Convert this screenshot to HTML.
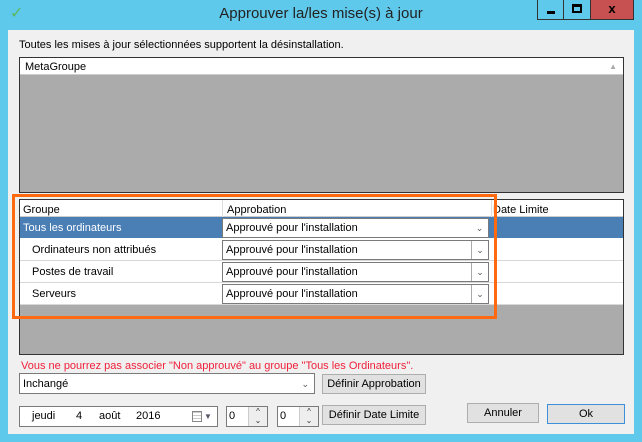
<!DOCTYPE html><html><head><style>
*{box-sizing:border-box;margin:0;padding:0}
body{width:642px;height:442px;background:#5fc9eb;font-family:"Liberation Sans",sans-serif;font-size:11px;color:#000;position:relative;overflow:hidden}
.a{position:absolute}
.client{left:8px;top:30px;width:626px;height:404px;background:#f0f0f0}
.btn{background:#e1e1e1;border:1px solid #adadad;text-align:center;line-height:18px;font-size:11px}
.combo{background:#fff;border:1px solid #7a7a7a}
.row{position:absolute;left:0;width:603px;height:22px;border-bottom:1px solid #d8d8d8}
.row>span{position:absolute;top:5px}
.cb{position:absolute;left:202px;top:1px;width:267px;height:20px;background:#fff;border:1px solid #7a7a7a;line-height:19px;padding-left:3px}
.cb .dd{position:absolute;right:0;top:0;width:17px;height:18px;border-left:1px solid #aaa;text-align:center;color:#555;font-size:9px}
</style></head><body>
<div class="a" style="left:10px;top:3px;color:#5cb85c;font-size:16px">✓</div>
<div class="a" style="left:0;width:642px;top:5px;text-align:center;font-size:15px;color:#222">Approuver la/les mise(s) à jour</div>
<div class="a" style="left:537px;top:0;width:27px;height:20px;border:1px solid #333;border-top:none"><div class="a" style="left:9px;top:11px;width:8px;height:3px;background:#000"></div></div>
<div class="a" style="left:563px;top:0;width:28px;height:20px;border:1px solid #333;border-top:none"><div class="a" style="left:8px;top:4px;width:10px;height:9px;border:2px solid #000;border-top-width:3px"></div></div>
<div class="a" style="left:590px;top:0;width:44px;height:20px;background:#c75050;border:1px solid #333;border-top:none;text-align:center;font-weight:bold;font-size:13px;line-height:17px">x</div>
<div class="a client"></div>
<div class="a" style="left:19px;top:39px">Toutes les mises à jour sélectionnées supportent la désinstallation.</div>
<div class="a" style="left:19px;top:57px;width:605px;height:136px;background:#ababab;border:1px solid #333">
 <div class="a" style="left:0;top:0;width:603px;height:17px;background:#fff;border-bottom:1px solid #ccc;padding-left:5px;line-height:18px">MetaGroupe<span style="position:absolute;right:6px;color:#aaa;font-size:8px">▲</span></div>
</div>
<div class="a" style="left:19px;top:199px;width:605px;height:156px;background:#ababab;border:1px solid #333">
 <div class="a" style="left:0;top:0;width:603px;height:17px;background:#fff;border-bottom:1px solid #ccc;line-height:20px">
  <span class="a" style="left:3px">Groupe</span><span class="a" style="left:202px;height:17px;border-left:1px solid #ddd;padding-left:4px">Approbation</span><span class="a" style="left:471px;height:17px;border-left:1px solid #ddd;padding-left:1px">Date Limite</span></div>
 <div class="row" style="top:17px;background:#4a7fb5;color:#fff;border-bottom:1px solid #fff"><span style="left:3px">Tous les ordinateurs</span><div class="cb" style="color:#000">Approuvé pour l'installation<div class="dd" style="border:none">⌄</div></div></div>
 <div class="row" style="top:39px;background:#fff"><span style="left:12px">Ordinateurs non attribués</span><div class="cb">Approuvé pour l'installation<div class="dd">⌄</div></div></div>
 <div class="row" style="top:61px;background:#fff"><span style="left:12px">Postes de travail</span><div class="cb">Approuvé pour l'installation<div class="dd">⌄</div></div></div>
 <div class="row" style="top:83px;background:#fff"><span style="left:12px">Serveurs</span><div class="cb">Approuvé pour l'installation<div class="dd">⌄</div></div></div>
</div>
<div class="a" style="left:12px;top:194px;width:485px;height:125px;border:3px solid #ff6a10"></div>
<div class="a" style="left:21px;top:360px;color:#f0203a">Vous ne pourrez pas associer "Non approuvé" au groupe "Tous les Ordinateurs".</div>
<div class="a combo" style="left:19px;top:373px;width:296px;height:21px;line-height:21px;padding-left:3px">Inchangé<span style="position:absolute;right:5px;color:#555;font-size:9px">⌄</span></div>
<div class="a btn" style="left:322px;top:374px;width:104px;height:20px">Définir Approbation</div>
<div class="a combo" style="left:19px;top:406px;width:199px;height:21px;line-height:19px"><span class="a" style="left:12px">jeudi</span><span class="a" style="left:56px">4</span><span class="a" style="left:79px">août</span><span class="a" style="left:116px">2016</span><span class="a" style="left:172px;top:4px;width:10px;height:11px;border:1px solid #888;background:repeating-linear-gradient(#ccc 0 1px,#fff 1px 3px)"></span><span class="a" style="left:184px;color:#556;font-size:8px">▼</span></div>
<div class="a combo" style="left:226px;top:406px;width:42px;height:21px;line-height:19px;padding-left:2px">0<span class="a" style="left:21px;top:0;width:19px;height:19px;background:#eee;border-left:1px solid #ccc;font-size:8px;line-height:9px;text-align:center;color:#333">^<br>⌄</span></div>
<div class="a combo" style="left:277px;top:406px;width:42px;height:21px;line-height:19px;padding-left:2px">0<span class="a" style="left:21px;top:0;width:19px;height:19px;background:#eee;border-left:1px solid #ccc;font-size:8px;line-height:9px;text-align:center;color:#333">^<br>⌄</span></div>
<div class="a btn" style="left:322px;top:405px;width:104px;height:20px">Définir Date Limite</div>
<div class="a btn" style="left:467px;top:403px;width:72px;height:20px">Annuler</div>
<div class="a btn" style="left:547px;top:404px;width:78px;height:20px;border:1px solid #3c8fd8">Ok</div>
</body></html>
